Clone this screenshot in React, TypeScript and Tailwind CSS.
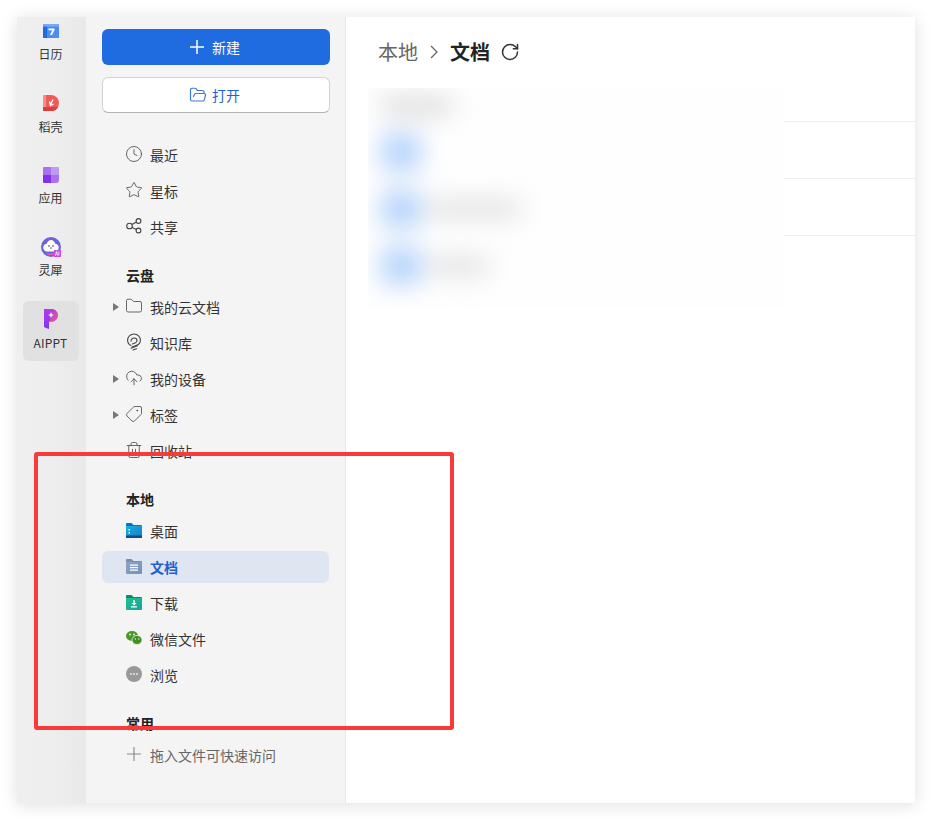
import React from 'react';
import { FolderOpen, Clock, Star, Folder, CloudUpload, Tag, Trash2, RotateCw } from 'lucide-react';

const cjk = "font-['Noto_Sans_CJK_SC','Noto_Sans',sans-serif]";

const PlusMark = ({ color, width }: { color: string; width: number }) => (
  <svg width="16" height="16" viewBox="0 0 16 16" fill="none" stroke={color} strokeWidth={width}>
    <path d="M1 8h14M8 1v14" />
  </svg>
);

const ShareIcon = () => (
  <svg width="16" height="16" viewBox="0 0 16 16" fill="none" stroke="#444" strokeWidth="1.1">
    <circle cx="3.500" cy="8" r="2.800" />
    <circle cx="12.500" cy="3" r="2.400" />
    <circle cx="12.500" cy="12.500" r="2.400" />
    <path d="M6 6.500l4.500-2.500M6 9.500l4.500 2" />
  </svg>
);

const KnowledgeIcon = () => (
  <svg width="16" height="18" viewBox="0 0 16 18" fill="none" stroke="#444" strokeWidth="1.1" strokeLinecap="round">
    <path d="M5 12.500C2.800 11.400 1.600 9.300 1.600 7.200 1.600 3.700 4.400 1 8 1s6.400 2.700 6.400 6.200c0 2.500-1.800 4.500-4.400 5.300l-4 1.600" />
    <path d="M5 8.200C5 6.400 6.300 5 8 5s3 1.200 3 2.700c0 1.600-2 2.500-4.500 3.300" />
    <path d="M5 15.200l6.500-2.400M7 17l3.500-1.300" />
  </svg>
);

const CalendarLogo = () => (
  <svg width="16" height="14" viewBox="0 0 16 14">
    <rect width="16" height="14" fill="#4c8df5" />
    <rect width="4" height="14" fill="#1f6be0" />
    <rect width="16" height="2.500" fill="#7aa9f5" />
    <path d="M5.500 4.500h6v1.600L9 11H7l2.200-4.700H5.500z" fill="#fff" />
  </svg>
);

const DaokeLogo = () => (
  <svg width="16" height="16" viewBox="0 0 16 16">
    <path d="M0 0h8a8 8 0 0 1 0 16H0z" fill="#f25a5a" />
    <path d="M0 0h3v16H0z" fill="#f98b8b" />
    <path d="M0 12h15.200a8 8 0 0 1-7.200 4H0z" fill="#e23b3b" />
    <path d="M6.500 6.500l.8 3.500L10 4.500M7.500 10.500l3-1.500" stroke="#fff" strokeWidth="1.300" fill="none" />
  </svg>
);

const AppsLogo = () => (
  <svg width="16" height="16" viewBox="0 0 16 16">
    <path d="M1 0h7v8H0V1a1 1 0 0 1 1-1z" fill="#a970f0" />
    <path d="M8 0h7a1 1 0 0 1 1 1v7H8z" fill="#c09af2" />
    <path d="M0 8h8v8H1a1 1 0 0 1-1-1z" fill="#8432ea" />
    <path d="M8 8h8v5a3 3 0 0 1-3 3H8z" fill="#a970f0" />
  </svg>
);

const LingxiLogo = () => (
  <svg width="20" height="20" viewBox="0 0 20 20">
    <circle cx="10" cy="10" r="10" fill="#6a63dc" />
    <path d="M2.500 12c-1-3 1-5 3-5 .6-2 2.500-4 4.500-4s3.900 2 4.500 4c2 0 4 2 3 5-.5 1.500-2 2.500-3 2.500H5.500c-1 0-2.500-1-3-2.500z" fill="#fff" />
    <path d="M5 16.500h8v1.500H7z" fill="#e85bb5" />
    <circle cx="8" cy="9" r=".8" fill="#333" />
    <circle cx="12" cy="9" r=".8" fill="#333" />
    <path d="M9 11h2" stroke="#333" strokeWidth=".8" />
    <rect x="13" y="13" width="7" height="7" fill="#c94be0" />
    <path d="M14.500 18.500l1-4 1 4M17.800 14.500v4" stroke="#fff" strokeWidth=".8" fill="none" />
  </svg>
);

const AipptLogo = () => (
  <svg width="14" height="20" viewBox="0 0 14 20">
    <defs>
      <linearGradient id="pBar" x1="0" y1="0" x2="0" y2="1">
        <stop offset="0" stopColor="#b53be8" />
        <stop offset="1" stopColor="#7a3bea" />
      </linearGradient>
      <linearGradient id="pBowl" x1="0" y1="0" x2="1" y2="1">
        <stop offset="0" stopColor="#a13be8" />
        <stop offset="1" stopColor="#f0568f" />
      </linearGradient>
    </defs>
    <path d="M0 0h7.500a6.300 6.300 0 0 1 0 12.600H5V20L2 19l-2-1z" fill="url(#pBar)" />
    <path d="M7.500 0a6.300 6.300 0 0 1 0 12.600H5L8 5z" fill="url(#pBowl)" />
    <path d="M7 3l.9 2.300L10 6l-2.100.8L7 9l-.9-2.200L4 6l2.100-.7z" fill="#fff" />
  </svg>
);

const FolderFile = ({ top, body, bottom, id, children }: { top: string; body: string; bottom: string; id: string; children?: React.ReactNode }) => (
  <svg width="16" height="15" viewBox="0 0 16 15">
    <defs>
      <linearGradient id={id} x1="0" y1="0" x2="1" y2="1">
        <stop offset="0" stopColor={body} />
        <stop offset="1" stopColor={bottom} />
      </linearGradient>
    </defs>
    <path d="M0 1a1 1 0 0 1 1-1h4.500l2 2H15a1 1 0 0 1 1 1v3H0z" fill={top} />
    <path d="M0 3h15a1 1 0 0 1 1 1v10a1 1 0 0 1-1 1H1a1 1 0 0 1-1-1z" fill={`url(#${id})`} />
    {children}
  </svg>
);

const WechatIcon = () => (
  <svg width="16" height="14" viewBox="0 0 16 14">
    <ellipse cx="6" cy="5" rx="6" ry="5" fill="#4a9a22" />
    <ellipse cx="11" cy="9" rx="5" ry="4.500" fill="#3f8f1c" stroke="#f4f4f4" strokeWidth=".8" />
    <circle cx="4" cy="3.500" r=".9" fill="#f4f4f4" />
    <circle cx="8" cy="3.500" r=".9" fill="#f4f4f4" />
    <circle cx="9.300" cy="8" r=".7" fill="#f4f4f4" />
    <circle cx="12.700" cy="8" r=".7" fill="#f4f4f4" />
  </svg>
);

const BrowseIcon = () => (
  <svg width="16" height="16" viewBox="0 0 16 16">
    <circle cx="8" cy="8" r="8" fill="#999" />
    <circle cx="5" cy="8" r=".9" fill="#eee" />
    <circle cx="8" cy="8" r=".9" fill="#eee" />
    <circle cx="11" cy="8" r=".9" fill="#eee" />
  </svg>
);

const NavRow = ({ icon, label, arrow, active, muted }: { icon: React.ReactNode; label: string; arrow?: boolean; active?: boolean; muted?: boolean }) => (
  <div className="h-9 pt-px">
    <div className={`flex h-8 w-[227px] items-center rounded-md pl-[11px] ${active ? 'bg-[#dfe6f1]' : ''}`}>
      <span className="flex w-[13px] shrink-0 items-center">
        {arrow && <span className="h-0 w-0 border-y-[4px] border-l-[6px] border-y-transparent border-l-[#777]" />}
      </span>
      <span className="mb-[2px] flex h-[18px] w-4 shrink-0 items-center justify-center">{icon}</span>
      <span className={`ml-2 text-sm ${active ? 'font-semibold text-[#1f5fd0]' : muted ? 'text-[#666]' : 'text-[#333]'}`}>{label}</span>
    </div>
  </div>
);

const Heading = ({ label }: { label: string }) => (
  <div className="mt-4 flex h-7 items-center pb-[2px] pl-6 text-sm font-bold text-[#222]">{label}</div>
);

const iconProps = { size: 18, strokeWidth: 1.1, color: '#4a4a4a', className: 'shrink-0' };

export default function App() {
  return (
    <div className={`relative h-[820px] w-[932px] overflow-hidden bg-white pl-[17px] pt-[17px] ${cjk}`}>
      <div className="flex h-[786px] w-[898px] overflow-hidden bg-white shadow-[0_2px_16px_rgba(0,0,0,0.13)]">
        {/* app rail */}
        <div className="flex w-[69px] shrink-0 flex-col items-center bg-gradient-to-r from-[#efefef] via-[#eeeeee] to-[#e9e9e9] pr-[2px] text-xs text-[#333]">
          <div className="mt-[7px]"><CalendarLogo /></div>
          <div className="mt-2 leading-4">日历</div>
          <div className="mt-[33px] h-4"><DaokeLogo /></div>
          <div className="mt-2 leading-4">稻壳</div>
          <div className="mt-8 h-4"><AppsLogo /></div>
          <div className="mt-[7px] leading-4">应用</div>
          <div className="mt-[31px] h-5"><LingxiLogo /></div>
          <div className="mt-[5px] leading-4">灵犀</div>
          <div className="mt-[23px] flex h-[60px] w-14 flex-col items-center rounded-md bg-[#e1e1e1] pt-2">
            <div className="h-5"><AipptLogo /></div>
            <div className="mt-[6px] leading-4 tracking-[0.2px]">AIPPT</div>
          </div>
        </div>

        {/* sidebar */}
        <div className="w-[260px] shrink-0 border-r border-[#e6e6e6] bg-[#f4f4f4] pl-4 pt-3">
          <button className="flex h-9 w-[228px] items-center justify-center gap-[7px] rounded-md bg-[#1f6be0] pb-px pr-[3px] text-sm text-white">
            <PlusMark color="#fff" width={1.5} />
            新建
          </button>
          <button className="mt-3 flex h-9 w-[228px] items-center justify-center gap-[5px] rounded-md border border-[#d2d2d2] border-b-[#b5b5b5] bg-white pb-px pr-[3px] text-sm text-[#1f5fd0]">
            <FolderOpen size={18} strokeWidth={1.6} color="#3f78d8" />
            打开
          </button>

          <div className="mt-[25px]">
            <NavRow icon={<Clock {...iconProps} />} label="最近" />
            <NavRow icon={<Star {...iconProps} />} label="星标" />
            <NavRow icon={<ShareIcon />} label="共享" />
          </div>

          <Heading label="云盘" />
          <NavRow arrow icon={<Folder {...iconProps} />} label="我的云文档" />
          <NavRow icon={<KnowledgeIcon />} label="知识库" />
          <NavRow arrow icon={<CloudUpload {...iconProps} />} label="我的设备" />
          <NavRow arrow icon={<Tag {...iconProps} className="shrink-0 -scale-x-100" />} label="标签" />
          <NavRow icon={<Trash2 {...iconProps} />} label="回收站" />

          <Heading label="本地" />
          <NavRow
            icon={
              <FolderFile id="desk" top="#0b74c4" body="#19b3e0" bottom="#1579c9">
                <rect y="12.500" width="16" height="2.500" fill="#0a4f86" />
                <rect x="2.500" y="6" width="1.500" height="1.500" fill="#fff" />
                <rect x="2.500" y="9" width="1.500" height="1.500" fill="#fff" />
              </FolderFile>
            }
            label="桌面"
          />
          <NavRow
            active
            icon={
              <FolderFile id="docs" top="#7d8ea6" body="#8ea6c6" bottom="#7390b6">
                <path d="M4 5.500h8v1.200H4zM4 8h8v1.200H4zM4 10.500h8v1.200H4z" fill="#fff" />
              </FolderFile>
            }
            label="文档"
          />
          <NavRow
            icon={
              <FolderFile id="down" top="#0f8a63" body="#23c08c" bottom="#12a3a0">
                <path d="M7.300 5h1.400v3H10.500L8 10.500 5.500 8h1.800zM5 11.300h6v1.200H5z" fill="#fff" />
              </FolderFile>
            }
            label="下载"
          />
          <NavRow icon={<WechatIcon />} label="微信文件" />
          <NavRow icon={<BrowseIcon />} label="浏览" />

          <Heading label="常用" />
          <NavRow muted icon={<PlusMark color="#888" width={1.1} />} label="拖入文件可快速访问" />
        </div>

        {/* main */}
        <div className="flex-1 bg-white">
          <div className="flex h-[71px] items-center pb-[1px] pl-8">
            <span className="text-xl text-[#666]">本地</span>
            <svg width="8" height="14" viewBox="0 0 8 14" fill="none" stroke="#666" strokeWidth="1.300" className="mx-3">
              <path d="M1 1l6 6-6 6" />
            </svg>
            <span className="text-xl font-bold text-[#222]">文档</span>
            <RotateCw size={20} strokeWidth={1.8} color="#333" className="ml-[10px]" />
          </div>
          <div className="flex">
            <div className="ml-[22px] h-[220px] w-[416px] overflow-hidden bg-[#fefefe]">
              <div className="flex h-full w-[200px] flex-col pt-[10px] blur-[13px]">
                <div className="ml-[14px] h-4 w-[70px] bg-[#d6d6d6]" />
                <div className="ml-[14px] mt-[20px] h-[36px] w-[38px] rounded-md bg-[#b0d0fb]" />
                <div className="mt-[21px] flex items-center">
                  <div className="ml-[14px] h-[36px] w-[38px] rounded-md bg-[#b0d0fb]" />
                  <div className="ml-2 h-4 w-[92px] bg-[#dcdcdc]" />
                </div>
                <div className="mt-[21px] flex items-center">
                  <div className="ml-[14px] h-[36px] w-[38px] rounded-md bg-[#b0d0fb]" />
                  <div className="ml-2 h-4 w-[60px] bg-[#dcdcdc]" />
                </div>
              </div>
            </div>
            <div className="flex-1 bg-white">
              <div className="h-[34px] border-b border-[#eeeeee]" />
              <div className="h-[57px] border-b border-[#eeeeee]" />
              <div className="h-[57px] border-b border-[#eeeeee]" />
            </div>
          </div>
        </div>
      </div>

      {/* red annotation frame */}
      <div className="absolute left-[34px] top-[452px] h-[278px] w-[420px] rounded-[3px] border-4 border-[#f93a3a]" />
    </div>
  );
}
